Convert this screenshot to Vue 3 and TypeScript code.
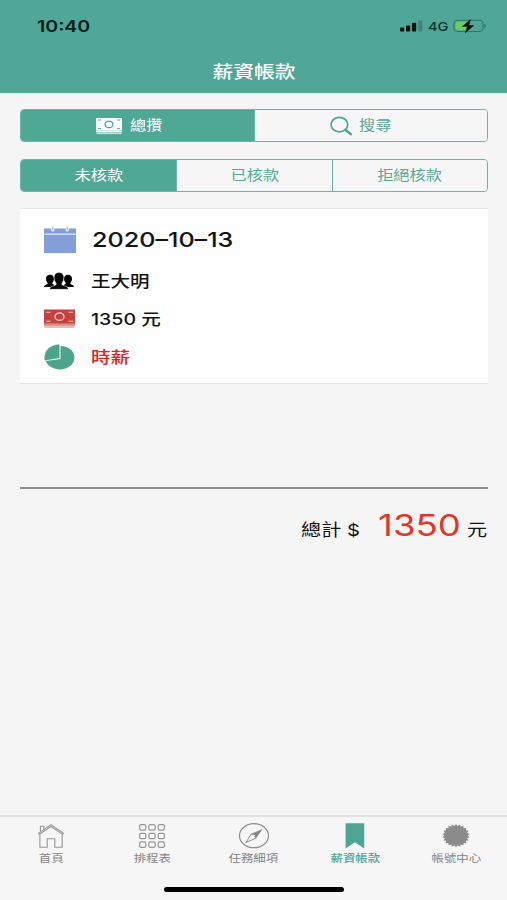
<script setup lang="ts">
interface Tab {
  id: string
  label: string
}

interface Segment {
  label: string
  active: boolean
}

const statuses: Segment[] = [
  { label: '未核款', active: true },
  { label: '已核款', active: false },
  { label: '拒絕核款', active: false },
]

const tabs: Tab[] = [
  { id: 'home', label: '首頁' },
  { id: 'schedule', label: '排程表' },
  { id: 'task', label: '任務細項' },
  { id: 'salary', label: '薪資帳款' },
  { id: 'account', label: '帳號中心' },
]

const gridCells = [0, 1, 2, 3, 4, 5, 6, 7, 8]

// Outline of the toothed badge used by the account tab
const teeth = 22
const badgePoints: string = Array.from({ length: teeth * 2 }, (_, i) => {
  const angle = (Math.PI * i) / teeth - Math.PI / 2
  const k = i % 2 === 0 ? 1 : 0.84
  return `${(14 + 13.8 * k * Math.cos(angle)).toFixed(2)},${(12 + 11.6 * k * Math.sin(angle)).toFixed(2)}`
}).join(' ')
</script>

<template>
  <div class="screen">
    <header class="header">
      <div class="status">
        <span class="wide left time">10:40</span>
        <div class="status-right">
          <svg class="signal" width="23" height="12" viewBox="0 0 23 12">
            <rect x="0" y="7.6" width="4.2" height="4" rx="0.8" />
            <rect x="6" y="5.4" width="4.2" height="6.2" rx="0.8" />
            <rect x="12" y="2.8" width="4.2" height="8.8" rx="0.8" />
            <rect x="18.2" y="0.4" width="4.2" height="11.2" rx="0.8" opacity="0.22" />
          </svg>
          <span class="wide left network">4G</span>
          <svg class="battery" width="34" height="16" viewBox="0 0 34 16">
            <rect x="1" y="2.3" width="29" height="11.2" rx="3.6" fill="none" stroke="#2f7568" stroke-width="1.1" />
            <path d="M31.3 6v4c2-.5 2-3.5 0-4z" fill="#2f7568" />
            <path d="M4.8 3.8h9.7v8.2H4.8a2.2 2.2 0 0 1-2.2-2.2V6a2.2 2.2 0 0 1 2.2-2.2z" fill="#68cd62" />
            <path d="M17.5 1.6 9.4 8.5h5l-2 6.3 8.4-7.3h-5.1z" fill="#05110e" stroke="#05110e" stroke-width="0.5" />
          </svg>
        </div>
      </div>
      <h1 class="title"><span class="wide">薪資帳款</span></h1>
    </header>

    <main class="content">
      <div class="segments">
        <button class="segment overview active">
          <svg class="seg-cash" width="26" height="17" viewBox="0 0 26 17">
            <rect width="26" height="12.6" fill="#fff" />
            <rect y="12.6" width="26" height="1.7" fill="#eef8f5" />
            <rect x=".5" y="14.5" width="25" height="1.6" fill="#c6e4dc" />
            <g fill="none" stroke="#4fa795">
              <ellipse cx="13" cy="6.4" rx="3.9" ry="3.3" stroke-width="1.4" />
              <path d="M2 2h3M21 2h3M2 10.6h3M21 10.6h3" />
            </g>
          </svg>
          <span class="wide left seg-label">總攢</span>
        </button>
        <button class="segment search">
          <svg class="seg-search" width="23" height="20" viewBox="0 0 23 20">
            <ellipse cx="9.4" cy="8.6" rx="8.4" ry="7.2" fill="none" stroke="#4fa795" stroke-width="1.7" />
            <path d="m15.3 13.7 5.6 4.5" stroke="#4fa795" stroke-width="2.5" stroke-linecap="round" />
          </svg>
          <span class="wide left seg-label">搜尋</span>
        </button>
      </div>

      <div class="segments second">
        <button v-for="s in statuses" :key="s.label" class="segment" :class="{ active: s.active }">
          <span class="wide">{{ s.label }}</span>
        </button>
      </div>

      <section class="card">
        <div class="row date">
          <svg class="row-icon" width="32" height="28" viewBox="0 0 32 28">
            <path d="M0 2.5h32v24.6H0z" fill="#849ed7" />
            <path d="M0 8.2h32" stroke="#e7edfa" stroke-width="1.2" />
            <path d="M8.8.5v4.8M23.2.5v4.8" stroke="#fff" stroke-width="3" />
            <path d="M8.8.5v4M23.2.5v4" stroke="#a9bce5" stroke-width="1.3" />
          </svg>
          <span class="wide left">2020–10–13</span>
        </div>
        <div class="row person">
          <svg class="row-icon" width="32" height="18" viewBox="0 0 32 18">
            <path d="M0 14.9c.3-2.6 3.300-2 3.700-3.500.1-.8-1.600-1.800-1.700-4.200C1.800 4.300 3.400 2.700 6 2.700s4.200 1.600 4 4.500c-.1 2.400-1.800 3.200-1.700 4.200.1.700 1.200 1 2 1.500v2z" />
            <path d="M30 14.900c-.3-2.600-3.300-2-3.700-3.500-.1-.8 1.600-1.800 1.700-4.200.2-2.900-1.400-4.500-4-4.500s-4.200 1.600-4 4.500c.1 2.400 1.800 3.200 1.700 4.200-.1.700-1.200 1-2 1.500v2z" />
            <path d="M5.600 17.300c.3-4 6.200-2.900 6.700-5.300.1-1-1.800-2-2.100-5.500C9.800 2.700 11.600.4 15 .4s5.200 2.300 4.800 6.100c-.3 3.500-2.200 4.500-2.100 5.500.5 2.400 6.400 1.300 6.700 5.300z" stroke="#fefefe" stroke-width=".5" />
          </svg>
          <span class="wide left">王大明</span>
        </div>
        <div class="row money">
          <svg class="row-icon" width="32" height="20" viewBox="0 0 32 20">
            <rect x="0" y=".5" width="31" height="14.3" fill="#c3423d" />
            <rect x="0" y="14.8" width="31" height="2.1" fill="#d98e8a" />
            <rect x=".5" y="17.1" width="30" height="1.8" fill="#e3b5b1" />
            <g fill="none" stroke="#f3c8c3">
              <ellipse cx="15.5" cy="7.7" rx="4.5" ry="3.7" stroke-width="1.4" />
              <path d="M2 3.2h4.5M24.5 3.2H29M2 12.3h4.5M24.5 12.3H29" stroke-width="1.1" />
            </g>
          </svg>
          <span class="wide left">1350 元</span>
        </div>
        <div class="row hourly">
          <svg class="row-icon" width="32" height="26" viewBox="0 0 32 26">
            <path d="M16.5 1.9C24.6 1.9 30.5 7 30.5 13.6S24 25.4 16.4 25.4C9.3 25.4 3.3 21.8 1.9 16.900l14.600-2z" fill="#4ca58a" />
            <path d="M15.5.6v13.4L.7 16.4C-.9 7.5 5.8.5 15.5.6z" fill="#4ca58a" />
          </svg>
          <span class="wide left">時薪</span>
        </div>
      </section>

      <div class="total">
        <span class="wide left total-label">總計 $</span>
        <span class="wide left total-value">1350</span>
        <span class="wide left total-unit">元</span>
      </div>
    </main>

    <nav class="tabbar">
      <div class="tabs">
        <a v-for="t in tabs" :key="t.id" class="tab" :class="{ current: t.id === 'salary' }">
          <svg width="32" height="26" viewBox="0 0 32 26">
            <g v-if="t.id === 'home'" fill="none" stroke="#969696" stroke-width="1.1">
              <path d="M3.5 10.4 16 1.6l12.5 8.8-.9 1L16 3.5 4.4 11.4z" />
              <path d="M4.9 11.4v12.8h7.3v-8.500h7.600v8.500h7.400V11.400M5.400 8.800V3.200h3.400v3.200" />
            </g>
            <g v-else-if="t.id === 'schedule'" fill="none" stroke="#969696" stroke-width="1.2">
              <rect v-for="c in gridCells" :key="c" :x="3.6 + (c % 3) * 9.3" :y="1.7 + Math.floor(c / 3) * 8.6" width="6.2" height="5.4" rx="1.4" />
            </g>
            <g v-else-if="t.id === 'task'">
              <ellipse cx="16" cy="12.7" rx="14.5" ry="12" fill="none" stroke="#8d8d8d" stroke-width="1.2" />
              <path d="M24.8 5.8 13.3 10.8l4.9 4.2z" fill="#858585" />
              <path d="m13.3 10.8 4.9 4.2-10.2 4.5z" fill="#f6f6f6" stroke="#858585" stroke-width=".9" />
              <ellipse cx="15.9" cy="12.7" rx="1.1" ry=".9" fill="#f6f6f6" />
            </g>
            <path v-else-if="t.id === 'salary'" d="M6.6.2h18.600v25.200l-9.300-6.200-9.300 6.200z" fill="#4da594" />
            <g v-else transform="translate(2 .6)">
              <polygon :points="badgePoints" fill="#8b8b8b" />
            </g>
          </svg>
          <span class="wide">{{ t.label }}</span>
        </a>
      </div>
      <div class="indicator"></div>
    </nav>
  </div>
</template>

<style>
body {
  margin: 0;
  background: #f5f5f5;
}
</style>

<style scoped>
.screen {
  width: 507px;
  height: 900px;
  display: flex;
  flex-direction: column;
  background: #f5f5f5;
  font-family: Inter, "Noto Sans CJK TC", sans-serif;
  color: #141414;
  overflow: hidden;
}

.wide {
  display: inline-block;
  white-space: pre;
  transform: scaleX(1.22);
}

.wide.left {
  transform-origin: left center;
}

.header {
  height: 93px;
  flex: none;
  background: #51a797;
}

.status {
  height: 52px;
  display: flex;
  align-items: center;
  justify-content: space-between;
  padding: 0 20px 0 37px;
}

.time {
  font-size: 16px;
  font-weight: 600;
  line-height: 20px;
  color: #06201b;
}

.status-right {
  display: flex;
  align-items: center;
}

.signal {
  fill: #05110e;
}

.network {
  width: 20px;
  margin: 1px 5px 0 5px;
  font-size: 12px;
  font-weight: 500;
  line-height: 16px;
  color: #0c332b;
}

.title {
  margin: 0;
  text-align: center;
  font-size: 17px;
  line-height: 24px;
  padding-top: 8px;
  font-weight: 500;
  color: #fff;
}

.content {
  flex: 1;
  padding: 16px 19px 0 20px;
}

.segments {
  display: grid;
  grid-auto-flow: column;
  grid-auto-columns: minmax(0, 1fr);
  height: 33px;
  box-sizing: border-box;
  border: 1.5px solid #6ab5a6;
  border-radius: 4px;
  overflow: hidden;
}

.second {
  margin-top: 17px;
}

.segment {
  display: flex;
  align-items: center;
  justify-content: center;
  border: 0;
  border-left: 1.5px solid #6ab5a6;
  padding: 0 0 2px;
  background: #f6f6f6;
  color: #57a997;
  font: inherit;
  font-size: 13.3px;
  line-height: 20px;
}

.segment:first-child {
  border-left: 0;
}

.segment.active {
  background: #4fa795;
  color: #fff;
}

.segment.overview {
  padding-right: 20px;
}

.segment.search {
  padding-right: 24px;
}

.seg-label {
  width: 33px;
}

.seg-cash {
  margin: 3px 4px 0 0;
}

.seg-search {
  margin: 2px 2px 0 0;
}

.card {
  margin-top: 16px;
  height: 176px;
  box-sizing: border-box;
  border-top: 1.5px solid #e8e8e8;
  border-bottom: 1.5px solid #e2e2e2;
  background: #fefefe;
  padding: 9px 24px 0;
  display: flex;
  flex-direction: column;
}

.row {
  height: 38px;
  display: flex;
  align-items: center;
  gap: 15px;
  font-size: 16px;
  line-height: 24px;
  font-weight: 500;
}

.date {
  height: 44px;
  font-size: 20.6px;
  gap: 16px;
}

.date .wide {
  margin-top: -1px;
}

.hourly {
  color: #e2231b;
}

.total {
  margin-top: 103px;
  height: 70px;
  border-top: 2px solid #8e8e8e;
  display: flex;
  align-items: baseline;
  justify-content: flex-end;
  padding-top: 17px;
  box-sizing: border-box;
}

.total-label {
  width: 62px;
  font-size: 16.5px;
  margin-right: 15px;
}

.total-value {
  width: 84px;
  margin-right: 5px;
  font-size: 30px;
  line-height: 38px;
  color: #e5352b;
}

.total-unit {
  width: 21px;
  font-size: 16.5px;
}

.tabbar {
  height: 85px;
  flex: none;
  box-sizing: border-box;
  border-top: 2px solid #e2e2e2;
  background: #f6f6f6;
}

.tabs {
  display: flex;
  padding-top: 6px;
}

.tab {
  flex: 1 1 0;
  display: flex;
  flex-direction: column;
  align-items: center;
  color: #858585;
  font-size: 10.2px;
  line-height: 16px;
}

.tab span {
  margin-top: 1px;
}

.tab.current {
  color: #4da594;
  font-weight: 500;
}

.indicator {
  width: 180px;
  height: 5px;
  margin: 21px auto 0;
  border-radius: 3px;
  background: #000;
}
</style>
